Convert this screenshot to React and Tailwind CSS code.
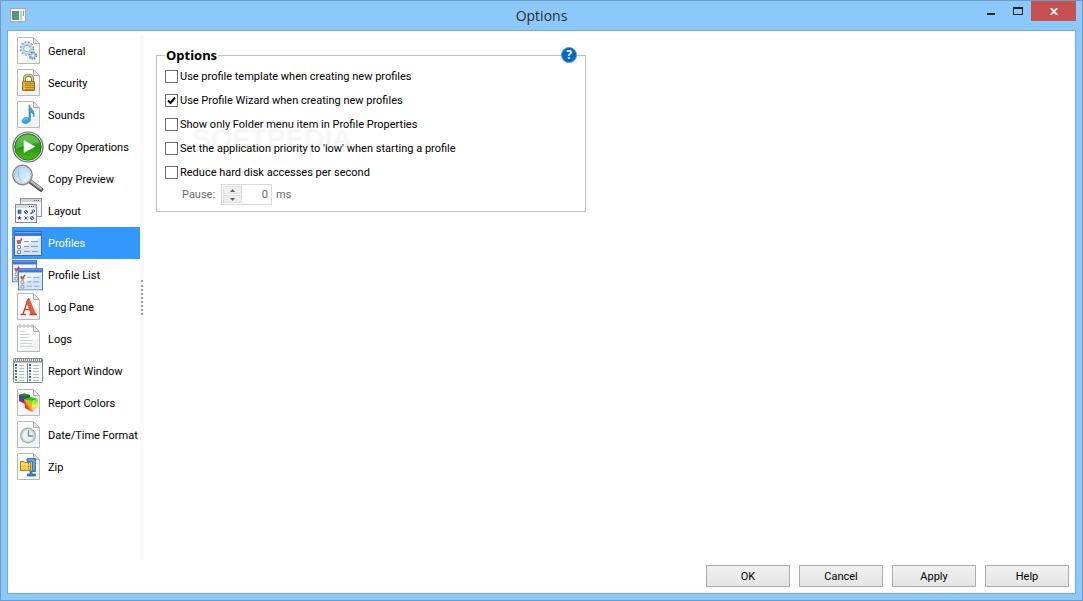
import { useState } from "react";

function Page({ children }) {
  return (
    <svg viewBox="0 0 32 32" className="size-8 shrink-0" aria-hidden="true">
      <path d="M5.500 2.500H21.500L27.500 8.500V28.500H5.500Z" fill="#fcfcfc" stroke="#b8b8b8" />
      <path d="M8 28H27V15Z" fill="#f3f3f3" />
      <path d="M21.500 2.500V8.500H27.500Z" fill="#e6e6e6" stroke="#b0b0b0" />
      {children}
    </svg>
  );
}

function Icon({ children }) {
  return (
    <svg viewBox="0 0 32 32" className="size-8 shrink-0" aria-hidden="true">
      {children}
    </svg>
  );
}

function GeneralIcon() {
  return (
    <Page>
      <circle cx="15" cy="13.500" r="6.200" fill="none" stroke="#7d9db6" strokeWidth="2" strokeDasharray="2 1.250" />
      <circle cx="15" cy="13.500" r="4.600" fill="none" stroke="#bdd9ea" strokeWidth="2.600" />
      <circle cx="15" cy="13.500" r="3.200" fill="#fff" stroke="#7f9db4" strokeWidth=".8" />
      <circle cx="21" cy="20.500" r="3.200" fill="none" stroke="#507c9e" strokeWidth="1.700" strokeDasharray="1.500 1" />
      <circle cx="21" cy="20.500" r="2" fill="#fff" stroke="#92bdd9" strokeWidth="1.400" />
      <circle cx="18" cy="23" r="1" fill="#7fa6c2" />
    </Page>
  );
}

function SecurityIcon() {
  return (
    <Page>
      <path d="M12.500 16V11.500C12.500 7 20.500 7 20.500 11.500V16" fill="none" stroke="#8e743b" strokeWidth="3" />
      <path d="M12.500 16V11.500C12.500 7 20.500 7 20.500 11.500V16" fill="none" stroke="#e6cc83" strokeWidth="1.400" />
      <rect x="10.500" y="14.500" width="12" height="9" rx=".5" fill="#e4ae38" stroke="#9a701b" />
      <path d="M11 16.500H22M11 18.500H22M11 20.500H22M11 22.500H22" stroke="#bd8622" />
      <path d="M12 15.500V23" stroke="#f5cd69" />
    </Page>
  );
}

function SoundsIcon() {
  return (
    <Page>
      <path d="M17.500 6C17.500 9 23.500 11 22 18C21.500 15 20 13.500 18.500 13.500V20C18.500 25 10 26 10 22C10 19 14 17.500 17 19V6Z" fill="#2ea7e5" stroke="#1872ad" strokeWidth=".5" />
      <path d="M11.500 21.500C12 20 14 19.500 15.500 20" stroke="#82d4fa" strokeWidth="1.300" fill="none" />
    </Page>
  );
}

function CopyOperationsIcon() {
  return (
    <Icon>
      <defs>
        <linearGradient id="playFill" x1="0" y1="0" x2="0" y2="1">
          <stop stopColor="#4db13d" />
          <stop offset=".5" stopColor="#249713" />
          <stop offset="1" stopColor="#49bd16" />
        </linearGradient>
      </defs>
      <circle cx="16" cy="16" r="15" fill="#e4ece3" stroke="#626962" strokeWidth="1.200" />
      <circle cx="16" cy="16" r="13.200" fill="url(#playFill)" stroke="#28751b" />
      <path d="M4 18C3 9 9 4 16 4C22 4 27 8 27.500 12C20 12 12 14 4 18Z" fill="#b7ed9c" opacity=".3" />
      <path d="M12 9.500L23 15.500L12 21.500Z" fill="#fff" stroke="#eef8ea" strokeWidth=".5" />
    </Icon>
  );
}

function CopyPreviewIcon() {
  return (
    <Icon>
      <defs>
        <linearGradient id="lensFill" x1="0" y1="0" x2="1" y2="1">
          <stop stopColor="#a9d0fa" />
          <stop offset=".55" stopColor="#cde5fe" />
          <stop offset="1" stopColor="#f4faff" />
        </linearGradient>
      </defs>
      <path d="M17.500 18L29 26.500" stroke="#555" strokeWidth="4.600" strokeLinecap="round" />
      <path d="M18.500 18L29 25.700" stroke="#b9b9b9" strokeWidth="2.200" strokeLinecap="round" />
      <circle cx="10.500" cy="12" r="9.700" fill="#fff" stroke="#858585" strokeWidth="1.400" />
      <circle cx="10.500" cy="12" r="8.300" fill="url(#lensFill)" stroke="#b6bdc5" strokeWidth=".8" />
      <path d="M7 5.500C5 11.500 7 15.500 10 18.500" fill="none" stroke="#8bb9ec" />
    </Icon>
  );
}

function LayoutIcon() {
  return (
    <Icon>
      <rect x="8.500" y="3.500" width="21" height="18" fill="#f6f7f8" stroke="#90959b" />
      <path d="M9 5.500H29" stroke="#d0d3d8" strokeWidth="3" />
      <path d="M22 5.500H28" stroke="#565b61" strokeDasharray="1 1" />
      <rect x="3.500" y="9.500" width="21" height="18" fill="#fafafc" stroke="#858b92" />
      <path d="M4 11.500H24" stroke="#d8dbe0" strokeWidth="3" />
      <path d="M17 11.500H23" stroke="#565b61" strokeDasharray="1 1" />
      <path d="M6 15H9V18.500H6ZM6 18L9 15" fill="#587fd0" stroke="#244cae" strokeWidth=".6" />
      <circle cx="14" cy="17" r="1.500" fill="none" stroke="#315cc0" />
      <path d="M18.500 19L21 16.500" stroke="#315cc0" strokeWidth="1.200" />
      <circle cx="21.500" cy="16" r="1.200" fill="none" stroke="#315cc0" />
      <path d="M7.500 20.500L8.200 22.200H10L8.600 23.300L9.300 25L7.500 24L5.800 25L6.400 23.300L5 22.200H6.800Z" fill="#244cae" />
      <path d="M12.500 21.500L15.500 24.500M15.500 21.500L12.500 24.500" stroke="#315cc0" />
      <circle cx="20" cy="23" r="1.500" fill="none" stroke="#315cc0" />
      <path d="M13 18L15 16M19 24L21 22" stroke="#315cc0" />
    </Icon>
  );
}

function ProfileWindow() {
  return (
    <g>
      <rect x=".5" y=".5" width="27" height="24" fill="#f4f7fe" stroke="#3c67b2" />
      <path d="M1 24V20L27 7V24Z" fill="#d8e4f9" />
      <rect x="1" y="1" width="26" height="4" fill="#3b77df" />
      <path d="M1 1.500H27" stroke="#79a7f5" />
      <path d="M3.500 9.500H6.500V12.500H3.500ZM3.500 14.500H6.500V17.500H3.500ZM3.500 19.500H6.500V22.500H3.500Z" fill="#fff" stroke="#888b92" />
      <path d="M3 9.500L5 12L8 7.500" fill="none" stroke="#dd462b" strokeWidth="1.500" />
      <path d="M10 10.500H15M17 10.500H24M10 15.500H15M17 15.500H24M10 20.500H16M18 20.500H24" stroke="#7b99e2" />
    </g>
  );
}

function ProfilesIcon() {
  return (
    <Icon>
      <g transform="translate(2 4)"><ProfileWindow /></g>
    </Icon>
  );
}

function ProfileListIcon() {
  return (
    <Icon>
      <g transform="translate(0 1) scale(.89)"><ProfileWindow /></g>
      <g transform="translate(6 9) scale(.89)"><ProfileWindow /></g>
    </Icon>
  );
}

function LogPaneIcon() {
  return (
    <Page>
      <path d="M8.500 23.500H14M17.500 23.500H25M11 23L16 8.500M12.500 18.500H19" stroke="#b5442a" strokeWidth="1.300" fill="none" />
      <path d="M16.800 7L23.500 23H19L14.500 10.500Z" fill="#ee5b31" stroke="#b73a1f" strokeWidth=".5" />
    </Page>
  );
}

function LogsIcon() {
  return (
    <Page>
      <path d="M6.500 3H21" stroke="#fff" strokeWidth="2" />
      <g fill="#fff" stroke="#a0a0a0" strokeWidth=".8">
        <circle cx="8" cy="3" r="1.200" />
        <circle cx="12" cy="3" r="1.200" />
        <circle cx="16" cy="3" r="1.200" />
        <circle cx="20" cy="3" r="1.200" />
      </g>
      <path d="M8 8.500H13M8 11.500H18M8 14.500H17M8 17.500H21M8 20.500H20M8 23.500H22" stroke="#c6d4de" />
    </Page>
  );
}

function ReportWindowIcon() {
  return (
    <Icon>
      <rect x="1.500" y="3.500" width="29" height="24" rx="1" fill="#f8f9f9" stroke="#808386" />
      <path d="M2 5.500H30" stroke="#8a8d91" strokeWidth="4" />
      <path d="M2 5H30" stroke="#e5e7e8" strokeWidth="2" strokeDasharray="1 1" />
      <path d="M15.500 8V27" stroke="#85898d" strokeWidth="1" />
      <path d="M4 9V26M18 9V26" stroke="#2c619c" strokeWidth="2" strokeDasharray="2 4" />
      <path d="M4 12V26M18 12V26" stroke="#63ae81" strokeWidth="2" strokeDasharray="2 4" />
      <path d="M7 10.500H12M7 13.500H12M7 16.500H12M7 19.500H12M7 22.500H12M7 25.500H12M21 10.500H27M21 13.500H27M21 16.500H27M21 19.500H27M21 22.500H27M21 25.500H27" stroke="#b9bbbd" />
    </Icon>
  );
}

function ReportColorsIcon() {
  return (
    <Page>
      <defs>
        <linearGradient id="rearCube" x1="1" y1="0" x2="0" y2="1"><stop stopColor="#087a28" /><stop offset=".5" stopColor="#344a68" /><stop offset="1" stopColor="#b91cb4" /></linearGradient>
        <linearGradient id="cubeLeft" x1="1" y1="0" x2="0" y2="1"><stop stopColor="#5be51c" /><stop offset=".4" stopColor="#f3bd13" /><stop offset=".65" stopColor="#f52c30" /><stop offset="1" stopColor="#e415cf" /></linearGradient>
        <linearGradient id="cubeRight" x1="0" y1="0" x2="0" y2="1"><stop stopColor="#54e31a" /><stop offset=".5" stopColor="#f3ef55" /><stop offset=".8" stopColor="#ffc4a8" /><stop offset="1" stopColor="#f05ce6" /></linearGradient>
      </defs>
      <path d="M7 8L12 6.500L18 8V15L13 17L7 14Z" fill="url(#rearCube)" />
      <path d="M7 8L12 6.500L18 8L13 10Z" fill="#148d36" />
      <path d="M12 12L19 10L26 12L20 14Z" fill="#22c51f" />
      <path d="M12 12L20 14V25L13 21Z" fill="url(#cubeLeft)" />
      <path d="M20 14L26 12V20L20 25Z" fill="url(#cubeRight)" />
    </Page>
  );
}

function DateTimeIcon() {
  return (
    <Page>
      <circle cx="16" cy="16.500" r="7.300" fill="#d7dfe5" stroke="#a3adb5" strokeWidth="1.300" />
      <circle cx="16" cy="16.500" r="5.700" fill="#edf2f5" stroke="#c2ced7" strokeWidth=".7" />
      <path d="M16.500 11.500V17H21" fill="none" stroke="#7b8690" strokeWidth="1.300" />
    </Page>
  );
}

function ZipIcon() {
  return (
    <Page>
      <path d="M15 7.500H23.500V20.500H20V23H23.500V25H15.500V23H18V20H20V10.500H15Z" fill="#318bd0" stroke="#1c629c" strokeWidth=".7" />
      <path d="M16 9H22V19" fill="none" stroke="#83c9f2" strokeWidth="1" />
      <path d="M8.500 10.500H12L13 11.500H18.500V19.500H8.500Z" fill="#f8ce43" stroke="#b97a10" />
      <path d="M9 13H18" stroke="#fff1a3" />
      <path d="M16.500 12V19" stroke="#b87518" strokeWidth="1" strokeDasharray="1.500 1" />
    </Page>
  );
}

const sections = [
  ["General", GeneralIcon],
  ["Security", SecurityIcon],
  ["Sounds", SoundsIcon],
  ["Copy Operations", CopyOperationsIcon],
  ["Copy Preview", CopyPreviewIcon],
  ["Layout", LayoutIcon],
  ["Profiles", ProfilesIcon],
  ["Profile List", ProfileListIcon],
  ["Log Pane", LogPaneIcon],
  ["Logs", LogsIcon],
  ["Report Window", ReportWindowIcon],
  ["Report Colors", ReportColorsIcon],
  ["Date/Time Format", DateTimeIcon],
  ["Zip", ZipIcon],
];

const settings = [
  ["Use profile template when creating new profiles", false],
  ["Use Profile Wizard when creating new profiles", true],
  ["Show only Folder menu item in Profile Properties", false],
  ["Set the application priority to 'low' when starting a profile", false],
  ["Reduce hard disk accesses per second", false],
];

function TitleBar() {
  return (
    <header className="grid h-[29px] shrink-0 grid-cols-[1fr_auto_1fr] items-start">
      <svg viewBox="0 0 16 14" className="mt-[7px] ml-[9px] h-[14px] w-4" aria-hidden="true">
        <defs><linearGradient id="appFill" x1="0" y1="0" x2="1" y2="1"><stop stopColor="#4f83b5" /><stop offset="1" stopColor="#4fa75e" /></linearGradient></defs>
        <rect x=".5" y=".5" width="15" height="13" fill="#f4f5f3" stroke="#a8a8a3" />
        <rect x="2" y="3" width="7" height="9" fill="url(#appFill)" />
        <rect x="10" y="3" width="2" height="9" fill="#c1cec7" />
        <rect x="13" y="3" width="1" height="5" fill="#78a68d" />
      </svg>
      <h1 className="pt-[5px] font-['Open_Sans',sans-serif] text-[14px] leading-5 text-[#2b2b2b]">Options</h1>
      <div className="flex justify-end pr-[6px]">
        <button aria-label="Minimize" className="flex h-5 w-[27px] items-center justify-center">
          <svg viewBox="0 0 8 10" className="h-[10px] w-2"><path d="M0 8H8" stroke="#222" strokeWidth="2" /></svg>
        </button>
        <button aria-label="Maximize" className="flex h-5 w-[27px] items-center justify-center">
          <svg viewBox="0 0 10 8" className="h-2 w-[10px]"><path d="M0 1H10" stroke="#222" strokeWidth="2" /><rect x=".5" y=".5" width="9" height="7" fill="none" stroke="#222" /></svg>
        </button>
        <button aria-label="Close" className="flex h-5 w-[45px] items-center justify-center bg-[#c75050]">
          <svg viewBox="0 0 8 7" className="h-[7px] w-2"><path d="M.7 0L7.300 7M7.300 0L.7 7" stroke="#fff" strokeWidth="1.800" /></svg>
        </button>
      </div>
    </header>
  );
}

function CheckRow({ label, initial }) {
  return (
    <label className="flex h-6 items-center gap-[2px] whitespace-nowrap">
      <span className="relative flex">
        <input type="checkbox" defaultChecked={initial} className="peer size-[13px] appearance-none border border-[#707070] bg-white" />
        <svg viewBox="0 0 13 13" className="pointer-events-none absolute inset-0 hidden size-[13px] peer-checked:block">
          <path d="M3 6.500L5.500 9L10 3.500" fill="none" stroke="#000" strokeWidth="2" />
        </svg>
      </span>
      <span className="pt-[2px]">{label}</span>
    </label>
  );
}

function Sidebar({ selected, onSelect }) {
  return (
    <nav className="w-32 shrink-0">
      {sections.map(([name, SectionIcon]) => (
        <button
          key={name}
          onClick={() => onSelect(name)}
          className={"flex h-8 w-full items-center gap-1 whitespace-nowrap text-left " + (name === selected ? "bg-[#3399ff] text-white" : "text-black")}
        >
          <SectionIcon />
          <span className="pt-[2px]">{name}</span>
        </button>
      ))}
    </nav>
  );
}

export default function App() {
  const [selected, setSelected] = useState("Profiles");
  return (
    <div className="flex min-h-screen flex-col border border-[#6f9cc6] bg-[#8dc8fa] font-['Roboto',sans-serif] text-[11px] leading-4 text-black">
      <TitleBar />
      <div className="mx-[6px] mb-[6px] flex flex-1 flex-col border border-[#75a9d8] bg-white">
        <div className="flex flex-1 pt-1 pl-1">
          <Sidebar selected={selected} onSelect={setSelected} />
          <div className="flex w-1 shrink-0 items-center justify-center bg-[#f8f8f8]">
            <div className="h-[35px] border-l-2 border-dotted border-[#999]" />
          </div>
          <main className="min-w-0 flex-1 pt-3 pl-3">
            <fieldset className="relative w-[430px] max-w-full border border-[#c0c0c0] px-2 pt-px pb-[6px]">
              <legend className="px-px font-['Noto_Sans',sans-serif] text-[13px] leading-4 font-bold">Options</legend>
              <button aria-label="Help on these options" className="absolute -top-4 right-2 flex size-4 items-center justify-center rounded-full border border-[#5a93c4] bg-[#0066cc] font-['Noto_Sans',sans-serif] text-[12px] leading-4 font-bold text-white">?</button>
              {settings.map(([label, initial]) => <CheckRow key={label} label={label} initial={initial} />)}
              <div className="flex h-[21px] items-center pl-[17px] text-[#6d6d6d]">
                <label htmlFor="pause" className="w-[39px]">Pause:</label>
                <div className="flex h-[21px] w-[51px] border border-[#d9d9d9] p-px">
                  <div className="flex w-[19px] shrink-0 flex-col gap-px">
                    <button disabled aria-label="Increase pause" className="flex flex-1 items-center justify-center border border-[#dedede] bg-[#efefef]"><svg viewBox="0 0 5 3" className="h-[3px] w-[5px]"><path d="M0 3L2.500 0L5 3Z" fill="#606060" /></svg></button>
                    <button disabled aria-label="Decrease pause" className="flex flex-1 items-center justify-center border border-[#dedede] bg-[#efefef]"><svg viewBox="0 0 5 3" className="h-[3px] w-[5px]"><path d="M0 0L2.500 3L5 0Z" fill="#606060" /></svg></button>
                  </div>
                  <input id="pause" disabled defaultValue="0" className="w-full min-w-0 bg-white pr-[2px] text-right" />
                </div>
                <span className="pl-1">ms</span>
              </div>
              <div aria-hidden="true" className="pointer-events-none absolute top-[58px] left-[34px] font-['Liberation_Sans',sans-serif] text-[28px] leading-8 font-bold text-white/30 [text-shadow:1px_2px_2px_rgba(0,0,0,0.05)]">SOFTPEDIA</div>
            </fieldset>
          </main>
        </div>
        <footer className="flex justify-end gap-[9px] px-[6px] pt-[5px] pb-[6px]">
          {["OK", "Cancel", "Apply", "Help"].map((name) => (
            <button key={name} className="h-[22px] w-[84px] border border-[#acacac] bg-linear-to-b from-[#f0f0f0] to-[#e5e5e5] pt-[2px]">{name}</button>
          ))}
        </footer>
      </div>
    </div>
  );
}
